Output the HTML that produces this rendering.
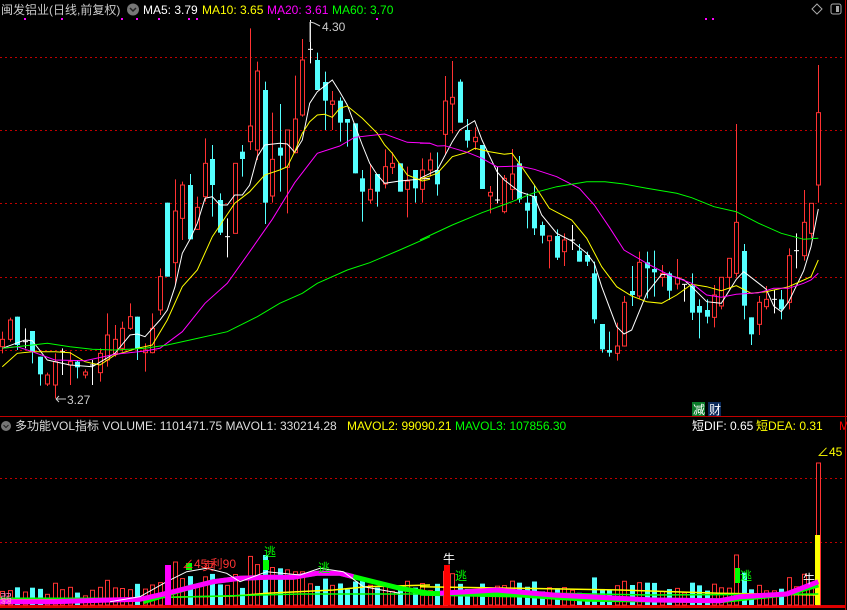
<!DOCTYPE html>
<html><head><meta charset="utf-8"><style>
html,body{margin:0;padding:0;background:#000;width:847px;height:610px;overflow:hidden}
svg{display:block}
text{font-family:"Liberation Sans","Noto Sans CJK SC",sans-serif;font-size:12px}
</style></head><body>
<svg id="s" width="847" height="610" xmlns="http://www.w3.org/2000/svg">
<rect width="847" height="610" fill="#000"/>
<g stroke="#c00000" stroke-width="1" stroke-dasharray="2,3">
<line x1="0" y1="57.5" x2="842" y2="57.5"/><line x1="0" y1="130.5" x2="842" y2="130.5"/>
<line x1="0" y1="203.5" x2="842" y2="203.5"/><line x1="0" y1="277.5" x2="842" y2="277.5"/>
<line x1="0" y1="350.5" x2="842" y2="350.5"/>
<line x1="0" y1="478.5" x2="842" y2="478.5"/><line x1="0" y1="542.5" x2="842" y2="542.5"/>
</g>
<line x1="0" y1="416.5" x2="847" y2="416.5" stroke="#c00000"/>
<line x1="845.5" y1="0" x2="845.5" y2="610" stroke="#c00000"/>
<rect x="0" y="605" width="845" height="3" fill="#e00000"/>
<g id="main"></g>
<g id="vol"></g>
<!-- header -->
<text x="1" y="14" fill="#c8c8c8" font-size="13">闽发铝业(日线,前复权)</text>
<circle cx="133" cy="9.5" r="6" fill="#777"/><path d="M130 8 L133 11 L136 8" stroke="#222" stroke-width="1.5" fill="none"/>
<text x="143" y="14" fill="#fff">MA5: 3.79</text>
<text x="202" y="14" fill="#ff0">MA10: 3.65</text>
<text x="267" y="14" fill="#f0f">MA20: 3.61</text>
<text x="332" y="14" fill="#0f0">MA60: 3.70</text>
<g fill="#f0f"><rect x="24" y="18" width="2" height="2"/><rect x="61" y="18" width="2" height="2"/><rect x="121" y="18" width="2" height="2"/><rect x="136" y="18" width="2" height="2"/><rect x="158" y="18" width="2" height="2"/><rect x="188" y="18" width="2" height="2"/><rect x="196" y="18" width="2" height="2"/><rect x="278" y="18" width="2" height="2"/><rect x="376" y="18" width="2" height="2"/><rect x="705" y="18" width="2" height="2"/><rect x="712" y="18" width="2" height="2"/></g>
<path d="M817 4 L822 9 L817 14 L812 9 Z" stroke="#aaa" fill="none"/>
<rect x="831" y="4" width="10" height="10" rx="2" stroke="#aaa" fill="none"/><rect x="836" y="6" width="3" height="6" fill="#aaa"/>
<text x="322" y="31" fill="#ccc">4.30</text>
<path d="M310 22 L310 42 M310 22 L314 23 L320 26" stroke="#ccc" fill="none"/>
<text x="67" y="404" fill="#ccc">3.27</text>
<path d="M56 399 L66 399 M56 399 L59 396 M56 399 L59 402" stroke="#ccc" fill="none"/>
<rect x="692" y="402" width="13" height="14" fill="#0a7a2a"/><text x="693" y="414" fill="#fff">减</text>
<rect x="708" y="402" width="13" height="14" fill="#0b2a5a"/><text x="709" y="414" fill="#fff">财</text>
<circle cx="6" cy="426" r="5" fill="#777"/><path d="M3.5 425 L6 427.5 L8.5 425" stroke="#222" fill="none"/>
<text x="15" y="430" fill="#ddd">多功能VOL指标 VOLUME: 1101471.75 MAVOL1: 330214.28</text>
<text x="347" y="430" fill="#ff0">MAVOL2: 99090.21</text>
<text x="455" y="430" fill="#0f0">MAVOL3: 107856.30</text>
<text x="692" y="430" fill="#fff">短DIF: 0.65</text>
<text x="756" y="430" fill="#ff0">短DEA: 0.31</text>
<text x="839" y="430" fill="#f00">M</text>
<text x="817" y="456" fill="#ff0">∠45</text>
</svg>
<script>
var NS="http://www.w3.org/2000/svg";
function el(p,t,a){var e=document.createElementNS(NS,t);for(var k in a)e.setAttribute(k,a[k]);p.appendChild(e);return e;}
var A=[[7,'r',958,980,935,1000],[30,'r',900,958,893,965],[52,'c',890,975,890,990],[75,'w',965,967,925,985],[97,'c',933,995,933,1030],[120,'c',1010,1063,1010,1097],[142,'r',1065,1092,1058,1098],[165,'r',1025,1095,1000,1135],[187,'w',995,997,985,1065],[210,'r',1025,1035,995,1095],[232,'c',1025,1042,1020,1075],[255,'r',1056,1065,1048,1075],[277,'w',1035,1037,1020,1095],[300,'r',1000,1058,985,1085],[322,'r',945,1020,880,1040],[345,'r',958,1000,915,1010],[367,'r',925,985,905,995],[390,'r',890,925,850,930],[412,'c',890,985,890,1020],[435,'r',990,998,970,1055],[457,'r',925,998,880,1000],[480,'r',770,870,745,885],[502,'c',548,770,548,770],[525,'r',573,728,478,795],[547,'r',495,595,485,660],[570,'c',495,658,462,658],[592,'r',562,628,530,630],[615,'r',430,530,355,545],[637,'c',417,495,375,590],[660,'c',540,638,520,645],[682,'w',650,652,595,712],[704,'r',430,640,430,640],[727,'c',395,417,375,470],[749,'r',318,365,25,390],[772,'r',153,390,125,420],[794,'c',210,548,185,612],[817,'r',418,528,278,548],[839,'c',383,407,252,515],[862,'r',330,442,330,580],[884,'r',297,398,167,400],[907,'r',120,285,57,290],[929,'w',88,90,0,130],[952,'c',120,210,98,210],[974,'c',186,242,155,330],[997,'r',243,253,213,330],[1019,'c',242,308,232,365],[1042,'c',297,308,297,380],[1064,'c',310,460,310,460],[1087,'c',475,515,450,605],[1109,'r',508,540,432,550],[1132,'c',462,515,462,560],[1154,'r',440,492,388,505],[1177,'r',430,442,397,462],[1199,'c',430,515,430,515],[1222,'r',483,508,440,592],[1244,'c',450,505,450,548],[1267,'r',450,508,415,548],[1289,'r',420,450,398,470]];
var B=[[52,'c',450,493,397,527],[74,'r',243,343,168,405],[97,'r',232,252,123,340],[119,'c',185,308,178,308],[142,'c',330,362,297,383],[164,'r',352,365,322,390],[186,'c',375,507,375,507],[209,'r',517,528,498,580],[231,'w',540,542,440,550],[253,'r',475,575,465,580],[276,'r',462,508,387,540],[298,'c',430,538,408,548],[320,'c',548,572,520,625],[343,'c',528,625,495,645],[365,'c',615,647,605,670],[388,'r',648,662,648,745],[410,'c',648,713,628,720],[433,'r',660,695,640,738],[455,'w',660,662,615,690],[478,'c',692,725,672,725],[500,'c',705,725,695,738],[523,'c',760,898,725,910],[545,'c',912,988,912,998],[567,'c',990,998,935,1010],[590,'r',978,1000,908,1022],[612,'r',847,978,828,980],[635,'c',813,825,738,858],[657,'r',727,828,695,835],[680,'c',727,745,695,835],[703,'c',747,757,692,830],[725,'r',760,772,735,800],[747,'c',760,812,755,840],[770,'r',773,792,717,808],[792,'w',793,795,793,845],[815,'c',797,878,760,900],[837,'c',858,878,838,955],[860,'c',870,890,838,910],[882,'r',825,892,795,922],[904,'r',772,858,772,868],[927,'r',715,772,715,808],[949,'r',607,760,312,770],[971,'c',693,857,672,898],[994,'c',892,943,892,975],[1016,'r',847,913,828,945],[1039,'r',838,860,798,868],[1061,'w',838,840,810,880],[1084,'c',838,868,810,898],[1106,'r',707,847,685,868],[1129,'w',692,694,640,745],[1151,'r',607,707,510,722],[1173,'r',550,640,550,655],[1195,'r',278,495,135,548]];
var C=[];A.forEach(function(a){C.push([a[0]/3,a[1],a[2]/3+20,a[3]/3+20,a[4]/3+20,a[5]/3+20]);});
B.forEach(function(a){C.push([a[0]/3+420,a[1],a[2]/3+20,a[3]/3+20,a[4]/3+20,a[5]/3+20]);});
var m=document.getElementById('main'),v=document.getElementById('vol');
var col={r:'#ff3232',c:'#54ffff',w:'#fff'};
C.forEach(function(c,i){var x=Math.round(c[0])+.5,co=col[c[1]];
 el(m,'line',{x1:x,x2:x,y1:c[4],y2:c[5],stroke:co});
 var h=Math.max(c[3]-c[2],1);
 if(c[1]=='r')el(m,'rect',{x:x-2,y:c[2],width:4,height:h,fill:'#000',stroke:co});
 else if(c[1]=='c')el(m,'rect',{x:x-2.5,y:c[2],width:5,height:h,fill:co});
 else el(m,'line',{x1:x-2.5,x2:x+2.5,y1:c[2],y2:c[2],stroke:co});
 var vh=Math.min(6+(c[5]-c[4])*0.35,50);
 if(i==C.length-1)vh=142;
 var vx=x, vy=605-vh;
 if(c[1]=='c')el(v,'rect',{x:vx-2.5,y:vy,width:5,height:vh,fill:'#54ffff'});
 else el(v,'rect',{x:vx-2,y:vy,width:4,height:vh,fill:'none',stroke:'#ff3232'});
});
el(v,'rect',{x:815,y:535,width:5,height:70,fill:'#ff0'});
function pl(pts,off,color,w,p){var s=pts.map(function(q){return (q[0]/3+off[0]).toFixed(1)+','+(q[1]/3+off[1]).toFixed(1)}).join(' ');el(p||m,'polyline',{points:s,fill:'none',stroke:color,'stroke-width':w||1});}
pl([[7,985],[75,960],[97,962],[142,1020],[210,1035],[277,1040],[345,1000],[390,945],[412,942],[435,950],[480,900],[502,870],[525,800],[547,700],[570,658],[592,610],[615,535],[637,530],[660,555],[682,555],[704,525],[727,525],[749,495],[772,410],[794,375],[839,370],[862,372],[884,397],[907,360],[929,250],[952,215],[997,180],[1019,215],[1042,255],[1087,375],[1109,430],[1132,465],[1154,490],[1199,483],[1290,475]],[0,20],'#fff');
pl([[0,475],[52,450],[97,365],[119,330],[164,302],[186,360],[231,455],[253,480],[298,515],[343,530],[365,585],[410,640],[455,663],[500,700],[523,730],[545,800],[590,920],[612,942],[635,930],[680,820],[725,763],[747,765],[792,780],[815,800],[860,845],[904,850],[949,778],[971,755],[1016,790],[1039,808],[1061,858],[1084,875],[1106,845],[1151,752],[1173,680],[1195,567]],[420,20],'#fff');
pl([[7,1040],[52,1000],[97,995],[165,995],[210,998],[255,1025],[300,1035],[345,1005],[412,985],[457,975],[502,900],[547,800],[592,750],[637,650],[704,550],[749,515],[794,465],[839,450],[862,440],[884,395],[907,340],[929,305],[952,285],[974,283],[997,292],[1019,265],[1042,258],[1087,295],[1132,340],[1154,375],[1177,400],[1222,465],[1267,483],[1290,478]],[0,20],'#ff0');
pl([[0,478],[52,460],[97,410],[142,397],[164,385],[209,395],[253,403],[276,400],[298,430],[343,495],[388,565],[455,600],[500,655],[545,740],[590,800],[635,828],[680,845],[725,850],[770,825],[815,793],[860,800],[904,812],[949,797],[994,820],[1039,815],[1106,800],[1151,780],[1173,770],[1195,720]],[420,20],'#ff0');
pl([[7,985],[52,980],[97,995],[165,1020],[255,1022],[345,1003],[435,993],[480,985],[547,935],[615,850],[682,790],[749,695],[817,598],[884,488],[952,400],[1019,378],[1064,352],[1154,342],[1222,367],[1290,370]],[0,20],'#f0f');
pl([[0,370],[30,370],[52,378],[74,377],[142,397],[186,415],[231,440],[298,438],[343,448],[410,470],[478,505],[523,555],[567,620],[612,690],[680,730],[747,765],[815,790],[860,825],[904,832],[949,823],[1016,818],[1061,805],[1106,805],[1151,790],[1173,780],[1195,760]],[420,20],'#f0f');
pl([[7,985],[97,975],[142,970],[210,980],[277,988],[345,990],[435,985],[502,975],[570,960],[682,935],[772,890],[839,850],[907,820],[952,790],[1042,750],[1109,728],[1199,690],[1290,650]],[0,20],'#0f0');
pl([[0,660],[97,615],[186,578],[276,545],[343,518],[410,500],[500,485],[555,485],[612,492],[680,505],[770,520],[815,533],[882,560],[949,575],[1016,610],[1084,640],[1151,658],[1195,655]],[420,20],'#0f0');
pl([[0,178],[300,176],[500,172],[700,168],[800,160],[1000,150],[1100,140],[1290,135]],[0,540],'#ff0',1.5,v);
pl([[0,140],[300,145],[600,150],[900,160],[1195,165]],[420,540],'#ff0',1.5,v);
pl([[0,175],[400,175],[900,162],[1290,162]],[0,540],'#0f0',1.5,v);
pl([[0,162],[400,160],[700,165],[1195,162]],[420,540],'#0f0',1.5,v);
pl([[430,185],[560,145],[640,125],[720,115],[800,112],[880,112],[950,100],[1020,100],[1060,110],[1120,125],[1200,145],[1290,160]],[0,540],'#0f0',5,v);
pl([[0,160],[300,165],[500,178],[700,180],[900,182],[1100,162],[1195,135]],[420,540],'#0f0',5,v);
pl([[0,185],[160,185],[330,180],[420,178],[500,160],[560,145],[640,125],[720,115],[800,112],[880,112],[950,100],[1020,100],[1060,110]],[0,540],'#f0f',5,v);
pl([[60,160],[230,150],[400,165],[700,180],[900,182],[960,170],[1100,162],[1195,125]],[420,540],'#f0f',5,v);
pl([[330,185],[420,170],[500,125],[560,95],[620,85],[680,100],[720,125],[760,110],[800,95],[900,105],[960,85],[1030,95],[1090,140],[1200,160]],[0,540],'#fff',1,v);
el(v,'rect',{x:165,y:565,width:6,height:40,fill:'#f0f'});
el(v,'rect',{x:186,y:563,width:6,height:7,fill:'#0f0'});
el(v,'rect',{x:263,y:560,width:6,height:10,fill:'#0f0'});
el(v,'rect',{x:444,y:565,width:6,height:40,fill:'#f00'});
el(v,'rect',{x:735,y:568,width:5,height:15,fill:'#0f0'});
[['逃',264,556,'#0f0'],['逃',318,572,'#0f0'],['逃',740,580,'#0f0'],['牛',443,563,'#fff'],['牛',803,583,'#fff'],['逃',455,580,'#0f0'],['卖',202,570,'#f33']].forEach(function(t){var e=el(v,'text',{x:t[1],y:t[2],fill:t[3]});e.textContent=t[0];});
var tt=el(v,'text',{x:182,y:568,fill:'#f33'});tt.textContent='∠45 利90';
var t2=el(v,'text',{x:0,y:603,fill:'#f8c'});t2.textContent='弱';
</script>
</body></html>
